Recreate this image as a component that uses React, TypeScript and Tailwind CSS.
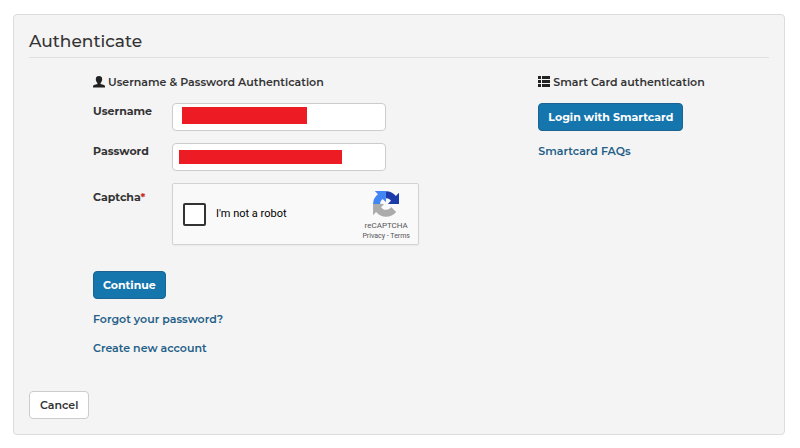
import { useState } from "react";

const fields = [
  {
    id: "username",
    label: "Username",
    type: "text",
    mask: "left-2.5 top-1 h-[17px] w-[125px]",
  },
  {
    id: "password",
    label: "Password",
    type: "password",
    mask: "left-[7px] top-[7px] h-3.5 w-[163px]",
  },
];

const accountLinks = [
  { id: 1, name: "Forgot your password?", href: "#" },
  { id: 2, name: "Create new account", href: "#" },
];

function UserIcon() {
  return (
    <svg
      viewBox="0 0 12 12"
      aria-hidden="true"
      className="h-3 w-3 shrink-0 text-[#222]"
    >
      <path
        d="M6 0C4 0 2.800 1.200 2.800 3.200c0 1.500.7 2.900 1.600 3.700v1L1 9.100C.4 9.400 0 9.800 0 10.400V11.500h12v-1.100c0-.6-.4-1-1-1.300L7.600 7.900v-1C8.500 6.100 9.200 4.700 9.200 3.200 9.200 1.200 8 0 6 0z"
        fill="currentColor"
      />
    </svg>
  );
}

function ListIcon() {
  return (
    <svg
      viewBox="0 0 12 12"
      aria-hidden="true"
      className="h-3 w-3 shrink-0 text-[#222]"
    >
      <path
        d="M0 0h3v3H0zM4 0h8v3H4zM0 4h3v3H0zM4 4h8v3H4zM0 8h3v3H0zM4 8h8v3H4z"
        fill="currentColor"
      />
    </svg>
  );
}

function RecaptchaLogo() {
  return (
    <svg viewBox="0 0 64 64" aria-hidden="true" className="h-[26px] w-[26px]">
      <path
        d="M64 31.950V4.600L56.400 12.200A31.900 31.900 0 0 0 32 .6v17.600c4.500-.7 9.700 1.500 12.200 5.800l-7.700 7.900z"
        fill="#1c3aa9"
      />
      <path
        d="M31.900.1H4.500l7.600 7.600A31.900 31.900 0 0 0 .1 32.400h17.700c-.6-5.200 2-10 6.300-12.500l7.700 7.700z"
        fill="#4285f4"
      />
      <path
        d="M.1 32v27.400l7.500-7.600A31.900 31.900 0 0 0 57 51.500L44.700 39.200A15.200 15.200 0 0 1 19.700 40l7.700-8z"
        fill="#ababab"
      />
    </svg>
  );
}

function Captcha() {
  const [checked, setChecked] = useState(false);

  return (
    <div className="flex h-[62px] w-[247px] items-center justify-between rounded-xs border border-[#d3d3d3] bg-[#f9f9f9] pr-2 pl-2.5 shadow-xs">
      <div className="flex items-center">
        <input
          id="captcha"
          type="checkbox"
          checked={checked}
          onChange={() => setChecked(!checked)}
          className="h-[23px] w-[23px] appearance-none rounded-xs border-2 border-[#333] bg-white checked:bg-[#4285f4]"
        />
        <label
          htmlFor="captcha"
          className="ml-2.5 font-['Roboto',sans-serif] text-[11px] text-black"
        >
          I'm not a robot
        </label>
      </div>
      <div className="flex flex-col items-center pt-1 font-['Roboto',sans-serif] text-[#555]">
        <RecaptchaLogo />
        <div className="mt-1 text-[8px] leading-[10px]">reCAPTCHA</div>
        <div className="text-[7px] leading-[10px] whitespace-nowrap">
          <a href="#">Privacy</a> - <a href="#">Terms</a>
        </div>
      </div>
    </div>
  );
}

export default function App() {
  return (
    <div className="bg-white pt-3.5 pr-[15px] pb-3 pl-[13px] font-['Montserrat','Inter',sans-serif] text-[11px] text-[#333]">
      <form
        className="rounded-sm border border-[#dcdcdc] bg-[#f4f4f4] px-[15px] pb-[15px]"
        onSubmit={(e) => e.preventDefault()}
      >
        <h1 className="border-b border-[#e0e0e0] pt-3.5 pb-1 text-[17px] leading-6 font-medium">
          Authenticate
        </h1>

        <div className="grid grid-cols-[446fr_231fr] pt-4 pl-16">
          <section>
            <h2 className="flex items-center gap-[3px] leading-4 font-semibold">
              <UserIcon />
              Username & Password Authentication
            </h2>

            <div className="mt-[13px] space-y-3">
              {fields.map((field) => (
                <div key={field.id} className="flex items-start">
                  <label
                    htmlFor={field.id}
                    className="w-[79px] leading-4 font-bold"
                  >
                    {field.label}
                  </label>
                  <div className="relative">
                    <input
                      id={field.id}
                      type={field.type}
                      className="block h-7 w-[214px] rounded-sm border border-[#ccc] bg-white px-2"
                    />
                    <span
                      aria-hidden="true"
                      className={`absolute bg-[#ed1c24] ${field.mask}`}
                    />
                  </div>
                </div>
              ))}
              <div className="flex items-start">
                <label
                  htmlFor="captcha"
                  className="w-[79px] pt-1.5 leading-4 font-bold"
                >
                  Captcha<span className="text-[#c9302c]">*</span>
                </label>
                <Captcha />
              </div>
            </div>

            <button
              type="submit"
              className="mt-[26px] h-7 rounded-sm border border-[#1b6391] bg-[#1576ae] px-[9px] font-bold text-white"
            >
              Continue
            </button>
            <ul className="mt-3 space-y-[13px]">
              {accountLinks.map((link) => (
                <li key={link.id} className="leading-4">
                  <a href={link.href} className="font-semibold text-[#245f88]">
                    {link.name}
                  </a>
                </li>
              ))}
            </ul>
          </section>

          <section>
            <h2 className="flex items-center gap-[3px] leading-4 font-semibold">
              <ListIcon />
              Smart Card authentication
            </h2>
            <button
              type="button"
              className="mt-[13px] h-7 rounded-sm border border-[#1b6391] bg-[#1576ae] px-[9px] font-bold text-white"
            >
              Login with Smartcard
            </button>
            <div className="mt-3 leading-4">
              <a href="#" className="font-semibold text-[#245f88]">
                Smartcard FAQs
              </a>
            </div>
          </section>
        </div>

        <button
          type="button"
          className="mt-[35px] h-7 rounded-sm border border-[#ccc] bg-white px-2.5 font-semibold"
        >
          Cancel
        </button>
      </form>
    </div>
  );
}
